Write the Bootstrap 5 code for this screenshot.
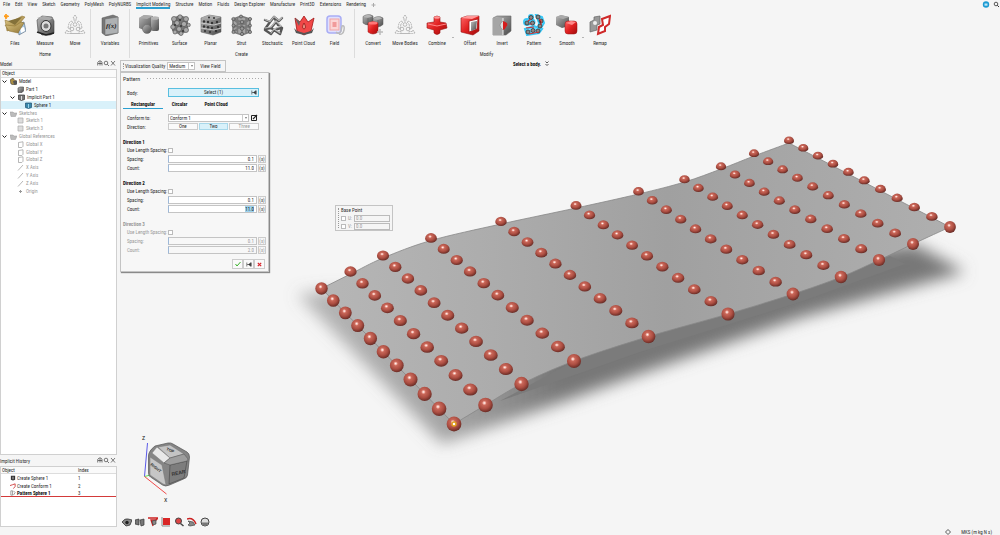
<!DOCTYPE html>
<html lang="en">
<head>
<meta charset="utf-8">
<meta name="viewport" content="width=device-width, initial-scale=1">
<title>Implicit Modeling</title>
<link rel="stylesheet" href="https://cdn.jsdelivr.net/npm/bootstrap@5.3.0/dist/css/bootstrap.min.css">
<style>
body{font-family:"Liberation Sans Narrow","Roboto Condensed","Noto Sans CJK SC",sans-serif;font-size:5px;line-height:8px;color:#2c2c2c;background:#f5f5f5}
button,input,select{font:inherit;color:inherit;border-radius:0}
button{background:none;border:0;padding:0}
svg{display:block;flex:none}
b,.heavy{font-weight:700;color:#111}
.tabs-row{height:9px;padding-left:3px;gap:5px}
.tabs-row a{color:#2c2c2c;text-decoration:none;height:9px;line-height:9px}
.tabs-row a.current{border-bottom:1px solid #2a9fd0;box-shadow:0 1px #2a9fd0;height:8px}
.ribbon-row{height:49px}
.ribbon-group{border-right:1px solid #dcdcdc;height:49px;padding-top:5px}
.ribbon-group:last-child{border:0}
.tool{width:30px;position:relative;text-align:center;white-space:nowrap;line-height:8px}
.tool svg{width:22px;height:22px;margin:0 auto 3px}
.w31{padding-left:3px;padding-right:4px}.w32{padding-left:2px}
.w31 .tool{width:31px}.w32 .tool{width:32px}
.tool.menu{margin-right:1px}
.tool.menu::after{content:"";position:absolute;right:-1px;top:23px;border:1px solid transparent;border-top-color:#777}
.group-name{text-align:center;line-height:8px;margin-top:3px}
.side{width:117px}
.side-head{height:11px;padding:2px 1px 0 0}
.box{background:#fff;border:1px solid #d0d0d0}
.col-title{height:8px;line-height:7px;border-bottom:1px solid #ddd;background:#fafafa;padding-left:1px}
.tree{display:grid;grid-auto-rows:1fr;height:117px;line-height:7px}
.tree div{display:flex;align-items:center;gap:2px}
.tree svg{width:7px;height:7px}
.tree .chev{width:5px;height:5px;margin:0 1px 0 1px}
.lv1{padding-left:16px}.lv2{padding-left:24px}.indent{padding-left:8px}
.dim{color:#999}
.tree .chosen{background:#d9f1fa}
.history-box{height:61px;margin-bottom:8px}
.history-box table{width:100%;border-collapse:separate;border-spacing:0}
.history-box th{font-weight:400;line-height:6px;padding:0 0 0 1px;border-bottom:1px solid #ddd;background:#fafafa}
.history-box td{padding:0 0 0 1px;line-height:8px}
.history-box svg{width:6px;height:6px;margin:0 1px 0 8px}
.history-box .end td{border-bottom:1px solid #d33a3a;line-height:6px}
.stage{position:relative;overflow:hidden}
.scene{position:absolute;inset:0;width:100%;height:100%}
.floating{position:absolute;background:#f5f5f5;border:1px solid #c4c4c4}
.viz{left:3px;top:2px;width:106px;height:12px}
.grip{width:1px;align-self:stretch;margin:2px;border-left:1px dotted #999}
.viz .grip{margin-right:1px}
.viz .drop{margin:0 5px 0 2px}
.pattern-box{left:3px;top:14px;width:149px;height:200px;box-shadow:1px 1px 1px #8a8a8a;background:#f7f7f7;padding:0 3px 0 2px}
.pattern-title{height:11px;font-size:6px;gap:6px;padding-right:1px}
.dots{height:3px;flex:1;background:radial-gradient(circle,#aaa 35%,transparent 40%) 0 0/3px 3px}
.line-row{display:grid;grid-template-columns:40px 89px 8px;column-gap:1px;height:9px;align-items:center;padding-left:4px;white-space:nowrap}
.line-row.low{height:8px}
.line-row input:not([type=checkbox]){width:100%;height:8px;border:1px solid #c4c4c4;border-left-color:#9db8d8;padding:0 2px;text-align:right;background:#fff;line-height:6px;outline:0}
.off,.off input{color:#999!important}
.off input:not([type=checkbox]){background:#f7f7f7!important}
input::selection{background:#9fd3ee;color:#111}
input[type=checkbox]{appearance:none;width:5px;height:5px;border:1px solid #bbb;background:#fff;margin:0}
.fx{border:1px solid #ccc;height:8px;width:8px;line-height:6px;color:#444}
.section{margin-bottom:7px}
.section.off{margin-bottom:5px}
.section h2{font-size:5px;line-height:8px;font-weight:700;margin:0;color:#111}
.section.off h2{color:#999}
.pick{grid-column:2/4;width:91px;height:9px;border:1px solid #59bfe0;background:#d9f1fa;text-align:center;line-height:7px;position:relative}
.pick svg{position:absolute;right:1px;top:1px}
.pattern-tabs{height:8px;margin-top:4px}
.pattern-tabs button{height:8px;line-height:7px;width:40px;border-bottom:1px solid transparent}
.pattern-tabs button.narrow{width:33px}
.pattern-tabs button.current{border-color:#2a9fd0}
select{appearance:none;border:1px solid #c4c4c4;background:#fff;height:8px;line-height:6px;padding:0 1px}
.drop{position:relative;display:flex}
.drop::after{content:"";position:absolute;right:2px;top:3px;border:1px solid transparent;border-top:2px solid #777}
.drop::before{content:"";position:absolute;right:6px;top:1px;bottom:1px;border-left:1px solid #ccc}
.conform{grid-template-columns:40px 81px 8px;column-gap:1px}
.quality{width:28px}
.first{margin-top:7px}
.seg{grid-column:2/4;width:91px;gap:1px}
.seg button{flex:1;height:7px;line-height:5px;border:1px solid #ccc;background:#fafafa}
.seg button.current{background:#d9f1fa;border-color:#a8d8ea}
.confirm button{width:11px;height:10px;border:1px solid #ccc;background:#fafafa;display:flex;align-items:center;justify-content:center}
.base{left:218px;top:147px;width:58px;height:26px}
.base label{color:#999}
.base input[type=text]{width:36px;height:7px;border:1px solid #bbb;background:#f5f5f5;color:#999;padding:0 1px;line-height:5px}
.base .uv{display:flex;align-items:center;justify-content:space-between;height:8px;width:49px}
.base .uv label{display:flex;align-items:center;gap:2px}
.hint{position:absolute;left:396px;top:2px;gap:4px}
.cube{position:absolute;left:18px;bottom:32px;width:60px;height:70px}
.viewbar{position:absolute;left:5px;bottom:8px;gap:3px}
.viewbar svg{width:10px;height:10px}
.status{position:absolute;right:8px;bottom:-1px;gap:10px}
</style>
</head>
<body class="vh-100 d-flex flex-column overflow-hidden">
<svg width="0" height="0" class="position-absolute">
<defs>
<linearGradient id="gm" x1="0" y1="0" x2="1" y2="1"><stop offset="0" stop-color="#bbb"/><stop offset=".5" stop-color="#808080"/><stop offset="1" stop-color="#4a4a4a"/></linearGradient>
<linearGradient id="rm" x1="0" y1="0" x2="1" y2="1"><stop offset="0" stop-color="#f66"/><stop offset=".5" stop-color="#e02020"/><stop offset="1" stop-color="#a00c0c"/></linearGradient>
<linearGradient id="gold" x1="0" y1="0" x2="1" y2="1"><stop offset="0" stop-color="#e0ca88"/><stop offset="1" stop-color="#907434"/></linearGradient>
<g id="gcube"><path d="M0 2.500Q5-1 10 2v6.500Q5 13 0 9z" fill="url(#gm)" stroke="#555" stroke-width=".5"/><path d="M.5 2.500Q5 5 9.500 2.200L5 .5z" fill="#b5b5b5"/><path d="M5 4v7" stroke="#555" stroke-width=".5"/></g>
<g id="tri" fill="none" stroke="#aaa" stroke-width=".8"><path d="M11 1l2 3h-1v3h-2V4H9zM1 19l2-3 .5 1.500H7v2H3.500zM21 19l-2-3-.5 1.500H15v2h3.500zM4 14l1-5 2-2 2 1-2 2-1 5zM18 14l-1-5-2-2-2 1 2 2 1 5z" stroke-dasharray="2 .6"/><circle cx="11" cy="10.500" r="1.800"/><circle cx="8" cy="15" r="1.800"/><circle cx="14" cy="15" r="1.800"/><path d="M7 19.500h8"/></g>
<g id="folder"><path d="M0 2h3l1 1h3L5.500 6.500H1z" fill="#bbb" stroke="#999" stroke-width=".5"/></g>
<g id="plane" fill="none" stroke="#999" stroke-width=".7"><path d="M1.500 1.500L6 .8v4.500L4.800 6.500H1.500z"/></g>
<g id="axis"><path d="M1 6.500L6 1" stroke="#999" stroke-width=".7"/></g>
<g id="sketch"><path d="M1 1h5v5H1z" fill="#ddd" stroke="#aaa" stroke-width=".7"/></g>
<g id="chevron"><path d="M.5 1.500L2.500 3.500 4.500 1.500" fill="none" stroke="#222"/></g>
<g id="minis" fill="none" stroke="#444" stroke-width=".7"><path d="M.7 5.500V2.500L2 1h2l1 1.500v3M1 3.500h4M3 1.500v4"/><circle cx="9" cy="3" r="1.800"/><path d="M10.300 4.300L12 6M14 1l4 4.500M18 1l-4 4.500"/></g>
<g id="nexticon"><path d="M.8 .5v4M5.200 .5v4M1 2.500h3M4.800.8L2.600 2.500l2.200 1.700z" stroke="#333" stroke-width=".6" fill="#333"/></g>
</defs>
</svg>
<header>
<nav class="tabs-row d-flex text-nowrap">
<a href="#">File</a><a href="#">Edit</a><a href="#">View</a><a href="#">Sketch</a><a href="#">Geometry</a><a href="#">PolyMesh</a><a href="#">PolyNURBS</a><a href="#" class="current">Implicit Modeling</a><a href="#">Structure</a><a href="#">Motion</a><a href="#">Fluids</a><a href="#">Design Explorer</a><a href="#">Manufacture</a><a href="#">Print3D</a><a href="#">Extensions</a><a href="#">Rendering</a>
<svg width="5" height="9" viewBox="0 0 5 9"><path d="M2.500 3v4M.5 5h4" stroke="#aaa"/></svg>
<svg class="ms-auto" width="18" height="9" viewBox="0 0 18 9"><circle cx="4" cy="4.500" r="3.200" fill="#1b9ad2"/><path d="M2.500 3.500h3v2.200h-3z" fill="#bfe6f7"/><circle cx="14" cy="4" r="1.800" fill="none" stroke="#333" stroke-width=".8"/><path d="M15.300 5.300L17 7" stroke="#333"/></svg>
</nav>
<div class="ribbon-row d-flex">
<section class="ribbon-group">
<div class="d-flex">
<button class="tool"><svg viewBox="0 0 22 22"><path d="M13 10l7-2 2 9-7 4z" fill="#a9c8e4" stroke="#567" stroke-width=".6"/><path d="M16 14l4-1 1 4-4 2z" fill="#fff"/><path d="M1 6l6 2 11-6 3 1-9 11-9 3z" fill="url(#gold)" stroke="#8a6c28" stroke-width=".5"/><path d="M4 7l14-4-7 8z" fill="#84713a"/><path d="M1 11l10 1 6-4 3 1-6 10-9-2z" fill="url(#gold)" stroke="#866a26" stroke-width=".5"/><path d="M2 0l.8 1.500 2 .8-2 .8L2 5l-.8-2-1.200-.8 1.200-.7z" fill="#ff9c1a" stroke="#ff9c1a"/></svg>Files</button>
<button class="tool"><svg viewBox="0 0 22 22"><path d="M3 6l5-4 10 1 2 4v12l-4 2H8l-4-4z" fill="url(#gm)" stroke="#444" stroke-width=".6"/><path d="M3 4l7-2 9 2-5 3z" fill="#aaa"/><ellipse cx="12" cy="12" rx="5" ry="5.500" fill="#ddd" stroke="#333"/><circle cx="12" cy="12" r="2.500" fill="#777"/><path d="M3 18l9 3 8-2" stroke="#222" stroke-width="1.500" fill="none"/></svg>Measure</button>
<button class="tool"><svg viewBox="0 0 22 22"><use href="#tri"/></svg>Move</button>
</div><div class="group-name">Home</div>
</section>
<section class="ribbon-group px-1">
<button class="tool"><svg viewBox="0 0 22 22"><path d="M3 4l11-3 5 2v16l-12 3-4-3z" fill="#777" stroke="#555" stroke-width=".5"/><path d="M6 5l13-2v16L6 21z" fill="#aeb1b3" stroke="#666" stroke-width=".5"/><text x="7" y="14" font-size="7" font-style="italic" font-weight="700" font-family="Liberation Serif" fill="#222">f(x)</text></svg>Variables</button>
</section>
<section class="ribbon-group w31">
<div class="d-flex">
<button class="tool"><svg viewBox="0 0 22 22"><path d="M1 4l5-3 9 1v12l-9 2-5-2z" fill="url(#gm)"/><path d="M1 4l5-3 9 1-6 3z" fill="#aaa"/><rect x="13" y="3" width="8" height="14" rx="2" fill="url(#gm)"/><ellipse cx="17" cy="4" rx="4" ry="1.800" fill="#b5b5b5"/><circle cx="9" cy="15" r="4.500" fill="url(#gm)" stroke="#666" stroke-width=".5"/></svg>Primitives</button>
<button class="tool"><svg viewBox="0 0 22 22"><path d="M3 4l8-3 8 3v13l-8 4-8-4z" fill="#777"/><g fill="#aaa" stroke="#555" stroke-width=".7"><circle cx="5" cy="5" r="2.500"/><circle cx="11" cy="3" r="2.200"/><circle cx="17" cy="5" r="2.500"/><circle cx="8" cy="9" r="2.500"/><circle cx="15" cy="10" r="2.600"/><circle cx="4" cy="13" r="2.300"/><circle cx="10" cy="15" r="2.500"/><circle cx="17" cy="16" r="2.500"/><circle cx="6" cy="18" r="2"/><circle cx="12" cy="19.500" r="2"/><circle cx="19.500" cy="11" r="1.800"/></g><g fill="#333"><circle cx="11" cy="6" r="1"/><circle cx="6" cy="11" r="1"/><circle cx="12" cy="12" r="1"/><circle cx="14" cy="17" r="1"/></g></svg>Surface</button>
<button class="tool"><svg viewBox="0 0 22 22"><path d="M1 4l8-3 12 2v15l-8 3-12-3z" fill="url(#gm)" stroke="#555" stroke-width=".5"/><path d="M1 4l8-3 12 2-7 3z" fill="#aaa"/><path d="M1 9l13 2 7-2M1 14l13 2 7-2" stroke="#ccc" fill="none"/><g fill="#333"><circle cx="4" cy="7.500" r="1.200"/><circle cx="8" cy="8" r="1.200"/><circle cx="12" cy="9" r="1.200"/><circle cx="4" cy="12.500" r="1.200"/><circle cx="8" cy="13.200" r="1.200"/><circle cx="12" cy="14" r="1.200"/><circle cx="5" cy="17" r="1.100"/><circle cx="10" cy="18" r="1.100"/><circle cx="17" cy="8" r="1.200"/><circle cx="18" cy="13" r="1.200"/><circle cx="16" cy="17" r="1.200"/><circle cx="9" cy="3.500" r="1"/><circle cx="14" cy="4" r="1"/></g></svg>Planar</button>
<button class="tool"><svg viewBox="0 0 22 22"><path d="M2 5l8-3 9 3v13l-8 3-9-3z" fill="#444" opacity=".45"/><path d="M2 5l9 3 8-3-9-3zv13l9 3 8-3V5M11 8v13M2 11.500l9 3 8-3M6.500 3.500v16M15 4v15M2 5l17 13M19 5L2 18M11 8l8 6M11 8L2 14" stroke="#7a7a7a" stroke-width="1.600" fill="none"/><g fill="#999" stroke="#444" stroke-width=".6"><circle cx="2.500" cy="5" r="1.600"/><circle cx="11" cy="8" r="1.800"/><circle cx="19" cy="5" r="1.600"/><circle cx="10" cy="2.500" r="1.500"/><circle cx="2.500" cy="18" r="1.600"/><circle cx="11" cy="20" r="1.600"/><circle cx="19" cy="18" r="1.600"/><circle cx="11" cy="14.500" r="1.800"/><circle cx="2.500" cy="11.500" r="1.500"/><circle cx="19" cy="11.500" r="1.500"/></g></svg>Strut</button>
<button class="tool"><svg viewBox="0 0 22 22"><path d="M3 6l5 2 4-5 5 4 3-3M8 8l-5 7 6-1 5-6 5 5-7 3-3 4-6-4M9 14l3 2 6 4 2-6M12 16l7-2M12 3l4 8" stroke="#555" stroke-width="2.400" fill="none" stroke-linejoin="round" stroke-linecap="round"/><path d="M3 5.500l5 2 4-5 5 4 3-3M3 14l6-1 5-6 5 5-7 3M9 19l3-4 6 4" stroke="#bbb" stroke-width="1.200" fill="none" stroke-linecap="round"/></svg>Stochastic</button>
<button class="tool"><svg viewBox="0 0 22 22"><path d="M2 4l5 4 4-6 4 6 6-4-3 13-7 4-7-4z" fill="#f14848" stroke="#9f1515" stroke-width=".8"/><path d="M1 14l3 3 7 2 7-2 3-3-2 5-8 2-8-2z" fill="#555"/><path d="M11 9q3 5 0 6-3-1 0-6z" fill="#e98" stroke="#811" stroke-width=".7"/><path d="M2 4l5 4-1 4z" fill="#666"/></svg>Point Cloud</button>
<button class="tool"><svg viewBox="0 0 22 22"><rect x="3" y="2" width="14" height="17" rx="3" fill="#dfe0ff" stroke="#a9adf5" stroke-width="1.500"/><rect x="6" y="5" width="9" height="11" fill="#fbd5d5" stroke="#f1a5a5"/><rect x="8.500" y="8" width="4" height="5" fill="#f19a9a"/><path d="M12 18q3 3 5-1l1-5q3-1 2 4t-5 4" fill="none" stroke="#bbb" stroke-width="1.500"/></svg>Field</button>
</div><div class="group-name">Create</div>
</section>
<section class="ribbon-group w32">
<div class="d-flex">
<button class="tool"><svg viewBox="0 0 22 22"><use href="#gcube" x="1" y="0"/><use href="#gcube" x="11" y="2"/><path d="M6 9q5-3 10 0v9q-5 4-10 0z" fill="url(#rm)" stroke="#911" stroke-width=".5"/><ellipse cx="11" cy="9" rx="4.500" ry="1.500" fill="#f77"/><path d="M18 15v6M15 18h6" stroke="#bbb" stroke-width="1.500"/></svg>Convert</button>
<button class="tool"><svg viewBox="0 0 22 22"><use href="#tri"/></svg>Move Bodies</button>
<button class="tool menu"><svg viewBox="0 0 22 22"><path d="M8 3q3-2 6 0v5l6 1 1 5-7 2v3q-3 3-6 0v-3l-7-2 0-5 7-1z" fill="url(#rm)" stroke="#911" stroke-width=".6"/><ellipse cx="11" cy="3.500" rx="3" ry="1.200" fill="#f99"/><path d="M2 10l9 2 9-2" stroke="#f88" fill="none"/></svg>Combine</button>
<button class="tool"><svg viewBox="0 0 22 22"><path d="M2 4l6-2h12v15l-6 4-12-3z" fill="url(#rm)" stroke="#911" stroke-width=".6"/><path d="M2 4l6-2h12l-7 3z" fill="#f99"/><path d="M10 7l9-2-1 10-8 3z" fill="#fff" stroke="#a11" stroke-width=".8"/><path d="M12 8l6-1-1 8-5 2z" fill="url(#gm)"/></svg>Offset</button>
<button class="tool"><svg viewBox="0 0 22 22"><path d="M2 4l4-2h14v15l-5 4H2z" fill="url(#gm)" stroke="#666" stroke-width=".6"/><path d="M2 4h10v17H2z" fill="#a5a5a5"/><path d="M12 4v17" stroke="#eee"/><path d="M12 7q-6 4 0 9" fill="#ddd" stroke="#777" stroke-width=".5"/><path d="M12 7q7 2 3 6-1 3-3 3z" fill="#d51c1c"/></svg>Invert</button>
<button class="tool menu"><svg viewBox="0 0 22 22"><g fill="#6edcff" stroke="#38c8f8" stroke-width="2"><circle cx="4" cy="8" r="3"/><circle cx="8" cy="3" r="2"/><circle cx="9" cy="8" r="2.500"/><path d="M13 1l6 2 2 6-3 5-3 1 1-6z"/><path d="M2 15l9-3 8 3-3 4-12 2z"/></g><g fill="#888" stroke="#333" stroke-width=".8"><circle cx="4" cy="9" r="2"/><circle cx="8" cy="3.500" r="2"/><circle cx="9.500" cy="9" r="2"/><circle cx="15" cy="3" r="2"/><circle cx="18" cy="7" r="2"/><circle cx="17" cy="12" r="2"/><circle cx="5" cy="18" r="2"/><circle cx="10" cy="16.500" r="2"/><circle cx="15" cy="17" r="2"/></g><path d="M5 7l3-2M6 10h3M16 5l2 2v4M3 14l8-1M6 20l10-2" stroke="#c33" stroke-width="1.200"/></svg>Pattern</button>
<button class="tool menu"><svg viewBox="0 0 22 22"><path d="M0 3l5-2 8 2v9l-7 2-6-3z" fill="url(#gm)"/><path d="M0 3l5-2 8 2-6 2z" fill="#aaa"/><rect x="9" y="7" width="12" height="13" rx="3" fill="url(#rm)" stroke="#911" stroke-width=".5"/><path d="M10 9l5-2 5 1-4 3z" fill="#f88"/></svg>Smooth</button>
<button class="tool"><svg viewBox="0 0 22 22"><path d="M1 8l4-2V3l6-1v8l-3 1v5l-7 2z" fill="#999" stroke="#666" stroke-width=".7"/><circle cx="6" cy="9" r="2" fill="#eee"/><path d="M13 5l8-3-1 8-4 3v4l-7 3 1-7 4-2z" fill="#fff" stroke="#cf2a2a" stroke-width="2"/></svg>Remap</button>
</div><div class="group-name">Modify</div>
</section>
</div>
</header>
<main class="d-flex flex-grow-1">
<aside class="side d-flex flex-column flex-shrink-0">
<div class="side-head d-flex justify-content-between"><span>Model</span><svg width="19" height="8" viewBox="0 0 19 8"><use href="#minis"/></svg></div>
<div class="box flex-grow-1">
<div class="col-title">Object</div>
<div class="tree">
<div><svg class="chev" viewBox="0 0 5 5"><use href="#chevron"/></svg><svg viewBox="0 0 7 7"><path d="M0 2l3-2 1 2 3 1v3L4 7 1 6z" fill="#a98d43" stroke="#444" stroke-width=".6"/><path d="M3 3l4 0v3L4 7z" fill="#555"/></svg>Model</div>
<div class="lv1"><svg viewBox="0 0 7 7"><path d="M1 2l2-1h3.500v4L5 6.500H1z" fill="url(#gm)" stroke="#444" stroke-width=".6"/></svg>Part 1</div>
<div class="indent"><svg class="chev" viewBox="0 0 5 5"><use href="#chevron"/></svg><svg viewBox="0 0 7 7"><path d="M.5 1h6v4.500l-3 1-3-1z" fill="#777" stroke="#333" stroke-width=".7"/><path d="M3.500 2v4" stroke="#ddd"/></svg>Implicit Part 1</div>
<div class="lv2 chosen"><svg viewBox="0 0 7 7"><path d="M.5 1h6v4.500l-3 1-3-1z" fill="#3a88ab" stroke="#1c4f6d" stroke-width=".7"/><path d="M3.500 2v4" stroke="#9cd4ec"/></svg>Sphere 1</div>
<div class="dim"><svg class="chev" viewBox="0 0 5 5"><use href="#chevron"/></svg><svg viewBox="0 0 7 7"><use href="#folder"/></svg>Sketches</div>
<div class="lv1 dim"><svg viewBox="0 0 7 7"><use href="#sketch"/></svg>Sketch 1</div>
<div class="lv1 dim"><svg viewBox="0 0 7 7"><use href="#sketch"/></svg>Sketch 3</div>
<div class="dim"><svg class="chev" viewBox="0 0 5 5"><use href="#chevron"/></svg><svg viewBox="0 0 7 7"><use href="#folder"/></svg>Global References</div>
<div class="lv1 dim"><svg viewBox="0 0 7 7"><use href="#plane"/></svg>Global X</div>
<div class="lv1 dim"><svg viewBox="0 0 7 7"><use href="#plane"/></svg>Global Y</div>
<div class="lv1 dim"><svg viewBox="0 0 7 7"><use href="#plane"/></svg>Global Z</div>
<div class="lv1 dim"><svg viewBox="0 0 7 7"><use href="#axis"/></svg>X Axis</div>
<div class="lv1 dim"><svg viewBox="0 0 7 7"><use href="#axis"/></svg>Y Axis</div>
<div class="lv1 dim"><svg viewBox="0 0 7 7"><use href="#axis"/></svg>Z Axis</div>
<div class="lv1 dim"><svg viewBox="0 0 7 7"><path d="M3.500 2v3M2 3.500h3" stroke="#999"/></svg>Origin</div>
</div>
</div>
<div class="side-head d-flex justify-content-between"><span>Implicit History</span><svg width="19" height="8" viewBox="0 0 19 8"><use href="#minis"/></svg></div>
<div class="box history-box">
<table>
<thead><tr><th>Object</th><th width="39">Index</th></tr></thead>
<tbody>
<tr><td><div class="d-flex align-items-center"><svg viewBox="0 0 7 7"><path d="M1 1h5v4.500l-2.500 1-2.500-1z" fill="#333"/><path d="M3.500 2v3" stroke="#ccc"/></svg>Create Sphere 1</div></td><td>1</td></tr>
<tr><td><div class="d-flex align-items-center"><svg viewBox="0 0 7 7"><path d="M0 3l3-1 3-1v3L4 6.500" fill="none" stroke="#c33"/></svg>Create Conform 1</div></td><td>2</td></tr>
<tr class="end"><td><div class="d-flex align-items-center"><svg viewBox="0 0 7 7"><path d="M1 1h2v5H1zM4 1l2 2-2 3" fill="none" stroke="#777" stroke-width=".8"/></svg><b>Pattern Sphere 1</b></div></td><td>3</td></tr>
</tbody>
</table>
</div>
</aside>
<div class="stage flex-grow-1">
<svg class="scene" viewBox="117 58 883 477">
<defs>
<radialGradient id="ball" cx=".42" cy=".36" r=".66"><stop offset="0" stop-color="#fff"/><stop offset=".12" stop-color="#f3b5aa"/><stop offset=".24" stop-color="#c96759"/><stop offset=".6" stop-color="#ac4e42"/><stop offset="1" stop-color="#652a24"/></radialGradient>
<linearGradient id="sheet" x1="0" y1="0" x2="1" y2="0"><stop offset="0" stop-color="#b6b6b6"/><stop offset=".25" stop-color="#adadad"/><stop offset=".55" stop-color="#a0a0a0"/><stop offset="1" stop-color="#afafaf"/></linearGradient>
<linearGradient id="shade" gradientUnits="userSpaceOnUse" x1="300" y1="0" x2="560" y2="0"><stop offset="0" stop-color="#777" stop-opacity=".5"/><stop offset=".6" stop-color="#777" stop-opacity=".65"/><stop offset="1" stop-color="#777"/></linearGradient>
<filter id="soft" x="-10%" y="-20%" width="120%" height="140%"><feGaussianBlur stdDeviation="8"/></filter>
</defs>
<path d="M297 294L442 444 540 410 640 374 800 318 965 272 915 244 700 270 454 380 340 290z" fill="url(#shade)" filter="url(#soft)"/>
<path d="M500 401L574 361 648 336 728 314 793 294 841 277 890 256 905 264 800 302 640 352z" fill="#7b7b7b"/>
<path id="surface" fill="url(#sheet)" stroke="#888" stroke-width=".8"/>
<g id="balls"/>
<circle cx="454" cy="424" r="2" fill="#fff" stroke="#e0a020" stroke-width="1.500"/>
</svg>
<div class="floating viz d-flex align-items-center text-nowrap"><span class="grip"></span><label for="quality">Visualization Quality</label><span class="drop"><select id="quality" class="quality"><option>Medium</option></select></span><button>View Field</button></div>
<div class="hint d-flex align-items-center"><b>Select a body.</b><svg width="4" height="6" viewBox="0 0 4 6"><path d="M.5.5L2 2 3.500.5M.5 3L2 4.500 3.500 3" fill="none" stroke="#333" stroke-width=".8"/></svg></div>
<form class="floating pattern-box">
<div class="pattern-title d-flex align-items-center"><span>Pattern</span><span class="dots"></span></div>
<div class="line-row mt-1"><span>Body:</span><button type="button" class="pick">Select (1)<svg width="6" height="5" viewBox="0 0 6 5"><use href="#nexticon"/></svg></button></div>
<div class="pattern-tabs d-flex"><button type="button" class="heavy current">Rectangular</button><button type="button" class="heavy narrow">Circular</button><button type="button" class="heavy">Point Cloud</button></div>
<div class="line-row conform mt-1"><label for="conform">Conform to:</label><span class="drop"><select id="conform" class="w-100"><option>Conform 1</option></select></span><button type="button" aria-label="Edit"><svg width="8" height="8" viewBox="0 0 8 8"><path d="M1.500 1.500h5v5h-5z" fill="none" stroke="#222"/><path d="M3 5l4-4" stroke="#222" stroke-width="1.200"/></svg></button></div>
<div class="line-row"><span>Direction:</span><div class="seg d-flex"><button type="button">One</button><button type="button" class="current">Two</button><button type="button" class="off">Three</button></div></div>
<div class="section first"><h2>Direction 1</h2>
<div class="line-row low"><label for="l1">Use Length Spacing:</label><input type="checkbox" id="l1"></div>
<div class="line-row"><label for="s1">Spacing:</label><input id="s1" value="0.1"><button type="button" class="fx">(x)</button></div>
<div class="line-row"><label for="c1">Count:</label><input id="c1" value="11.0"><button type="button" class="fx">(x)</button></div></div>
<div class="section"><h2>Direction 2</h2>
<div class="line-row low"><label for="l2">Use Length Spacing:</label><input type="checkbox" id="l2"></div>
<div class="line-row"><label for="s2">Spacing:</label><input id="s2" value="0.1"><button type="button" class="fx">(x)</button></div>
<div class="line-row"><label for="c2">Count:</label><input id="c2" value="11.0"><button type="button" class="fx">(x)</button></div></div>
<div class="section off"><h2>Direction 3</h2>
<div class="line-row low"><label for="l3">Use Length Spacing:</label><input type="checkbox" id="l3" disabled></div>
<div class="line-row"><label for="s3">Spacing:</label><input id="s3" value="0.1" disabled><button type="button" class="fx off">(x)</button></div>
<div class="line-row"><label for="c3">Count:</label><input id="c3" value="2.0" disabled><button type="button" class="fx off">(x)</button></div></div>
<div class="confirm d-flex justify-content-end"><button type="button" aria-label="Apply"><svg width="6" height="6" viewBox="0 0 6 6"><path d="M.5 3l1.500 2L5.500 1" fill="none" stroke="#3bb32c"/></svg></button><button type="button" aria-label="Next"><svg width="6" height="5" viewBox="0 0 6 5"><use href="#nexticon"/></svg></button><button type="button" aria-label="Cancel"><svg width="5" height="5" viewBox="0 0 5 5"><path d="M.8.8l3.400 3.400M4.200.8L.8 4.200" stroke="#d8232a" stroke-width="1.200"/></svg></button></div>
</form>
<div class="floating base d-flex"><span class="grip"></span><div><div>Base Point</div><div class="uv"><label><input type="checkbox">U:</label><input type="text" value="0.0" aria-label="U value"></div><div class="uv"><label><input type="checkbox">V:</label><input type="text" value="0.0" aria-label="V value"></div></div></div>
<svg class="cube" viewBox="135 433 60 70">
<path d="M144.500 476.500L147.500 443" stroke="#5a5ae8" fill="none"/><path d="M144.500 476.500l8-2" stroke="#5ae85a"/><path d="M144.500 476.500L166.500 494" stroke="#f04a4a" fill="none"/>
<text x="142" y="440" font-size="6" fill="#222">Z</text><text x="164" y="502" font-size="6" fill="#222">X</text>
<path d="M155 446l13-3q3-.5 5 1l14 8q2.500 1.500 2.500 5l-2 18q-.5 3-4 4l-14 6q-4 2-7 0l-12-8q-2-1-2-4l0-17q0-5 6.500-10z" fill="#858585" stroke="#555" stroke-width=".7"/>
<path d="M158 447l12-2 14 9-14 4z" fill="#c4c4c4" stroke="#777" stroke-width=".5"/><path d="M150 457l12 8 4 20-3-1-13-9z" fill="#c6c6c6" stroke="#777" stroke-width=".5"/><path d="M152 453l5-6 13 11-6 5z" fill="#e8e8e8" stroke="#777" stroke-width=".5"/><path d="M170 465l17-4-3 17-15 6z" fill="#7d7d7d" stroke="#444" stroke-width=".6"/><path d="M164 463l6-5 14-4 4 5-1 2-17 4z" fill="#9e9e9e" stroke="#555" stroke-width=".5"/>
<g font-weight="700" font-family="Liberation Sans" font-size="4" fill="#333"><text transform="translate(172 476) rotate(-12)" font-size="5">REAR</text><text transform="translate(150 465) rotate(38)">RIGHT</text><text transform="translate(166 450) rotate(22)">TOP</text></g>
</svg>
<div class="viewbar d-flex">
<svg viewBox="0 0 10 10"><path d="M0 5q3-4 6-3l4 1-2 5-4 1z" fill="#888" stroke="#333" stroke-width=".8"/><circle cx="5" cy="5.500" r="1.700" fill="#222"/></svg>
<svg viewBox="0 0 10 10"><path d="M0 3l4-1v6L0 7zM5 3l4-1v6L6 9z" fill="#777" stroke="#333" stroke-width=".7"/></svg>
<svg viewBox="0 0 10 10"><path d="M0 1h10L8 3H3l2 6" fill="none" stroke="#c22" stroke-width="1.300"/><path d="M4 4l4-1v4L5 8z" fill="#888" stroke="#333" stroke-width=".6"/></svg>
<svg viewBox="0 0 10 10"><path d="M2 1h7v7H2z" fill="#d92626"/><path d="M1 0v9h8" fill="none" stroke="#888"/></svg>
<svg viewBox="0 0 10 10"><circle cx="4.500" cy="4" r="3" fill="#d44" stroke="#444"/><path d="M6.500 6.500L9.500 9" stroke="#444" stroke-width="1.500"/></svg>
<svg viewBox="0 0 10 10"><path d="M0 2q6-2 9 5" fill="none" stroke="#c22" stroke-width="1.500"/><path d="M1 4l5 1 2 3-5 1-2-1 2-2z" fill="#888" stroke="#444" stroke-width=".7"/></svg>
<svg viewBox="0 0 10 10"><circle cx="5" cy="5" r="4" fill="#ddd" stroke="#444"/><path d="M1.500 5.500h7L7 8.500H3z" fill="#777"/></svg>
</div>
<div class="status d-flex align-items-center text-nowrap"><svg width="6" height="6" viewBox="0 0 6 6"><path d="M3 .5L5.500 3 3 5.500.5 3z" fill="none" stroke="#333" stroke-width=".8"/></svg><span>MKS (m kg N s)</span></div>
</div>
</main>
<script>
const far = [[321.5,288.5],[350.5,272],[383,256],[431,238.5],[501,222],[576,206],[638.5,192],[684.5,180],[721,167],[754,154],[789,141]];
const near = [[454,424],[485.5,405],[521.5,384],[574,361],[648.5,336.5],[728,314],[793,294],[841,277],[879,260],[913,244],[950,227]];
// smooth curve through a list of points
function curve(p){
  let d = '';
  for (let i = 0; i < p.length - 1; i++) {
    const a = p[i-1] || p[i], b = p[i], c = p[i+1], e = p[i+2] || c;
    d += `C${b[0]+(c[0]-a[0])/6} ${b[1]+(c[1]-a[1])/6} ${c[0]-(e[0]-b[0])/6} ${c[1]-(e[1]-b[1])/6} ${c[0]} ${c[1]}`;
  }
  return d;
}
const back = [...near].reverse();
const rim = far.map((p, i) => [p[0], p[1] + (i ? 2 : 0)]);
document.getElementById('surface').setAttribute('d', `M${rim[0]}${curve(rim)}L${back[0]}${curve(back)}z`);
let out = '';
far.forEach((f, c) => {
  const n = near[c], u = (f[0] - 321) / 468;
  for (let k = 0; k <= 10; k++) {
    const s = k / 10, t = s / (s + (1 - s) * 1.14);
    const x = f[0] + (n[0] - f[0]) * t, y = f[1] + (n[1] - f[1]) * t;
    const r = (6.2 - 1.2 * u) + (1.2 - .3 * u) * t;
    if (k === 10 || c === 0) out += `<circle cx="${x}" cy="${y}" r="${r}" fill="url(#ball)"/>`;
    else {
      // only the cap above the surface shows: round top, flatter base
      const low = r * (.78 - .2 * u), w = r;
      out += `<path d="M${x-w} ${y}A${w} ${r*.92} 0 0 1 ${x+w} ${y}A${w} ${low} 0 0 1 ${x-w} ${y}z" fill="url(#ball)"/>`;
    }
  }
});
document.getElementById('balls').innerHTML = out;
const count = document.getElementById('c2');
count.focus();
count.select();
</script>
<script src="https://cdn.jsdelivr.net/npm/bootstrap@5.3.0/dist/js/bootstrap.bundle.min.js"></script>
</body>
</html>
